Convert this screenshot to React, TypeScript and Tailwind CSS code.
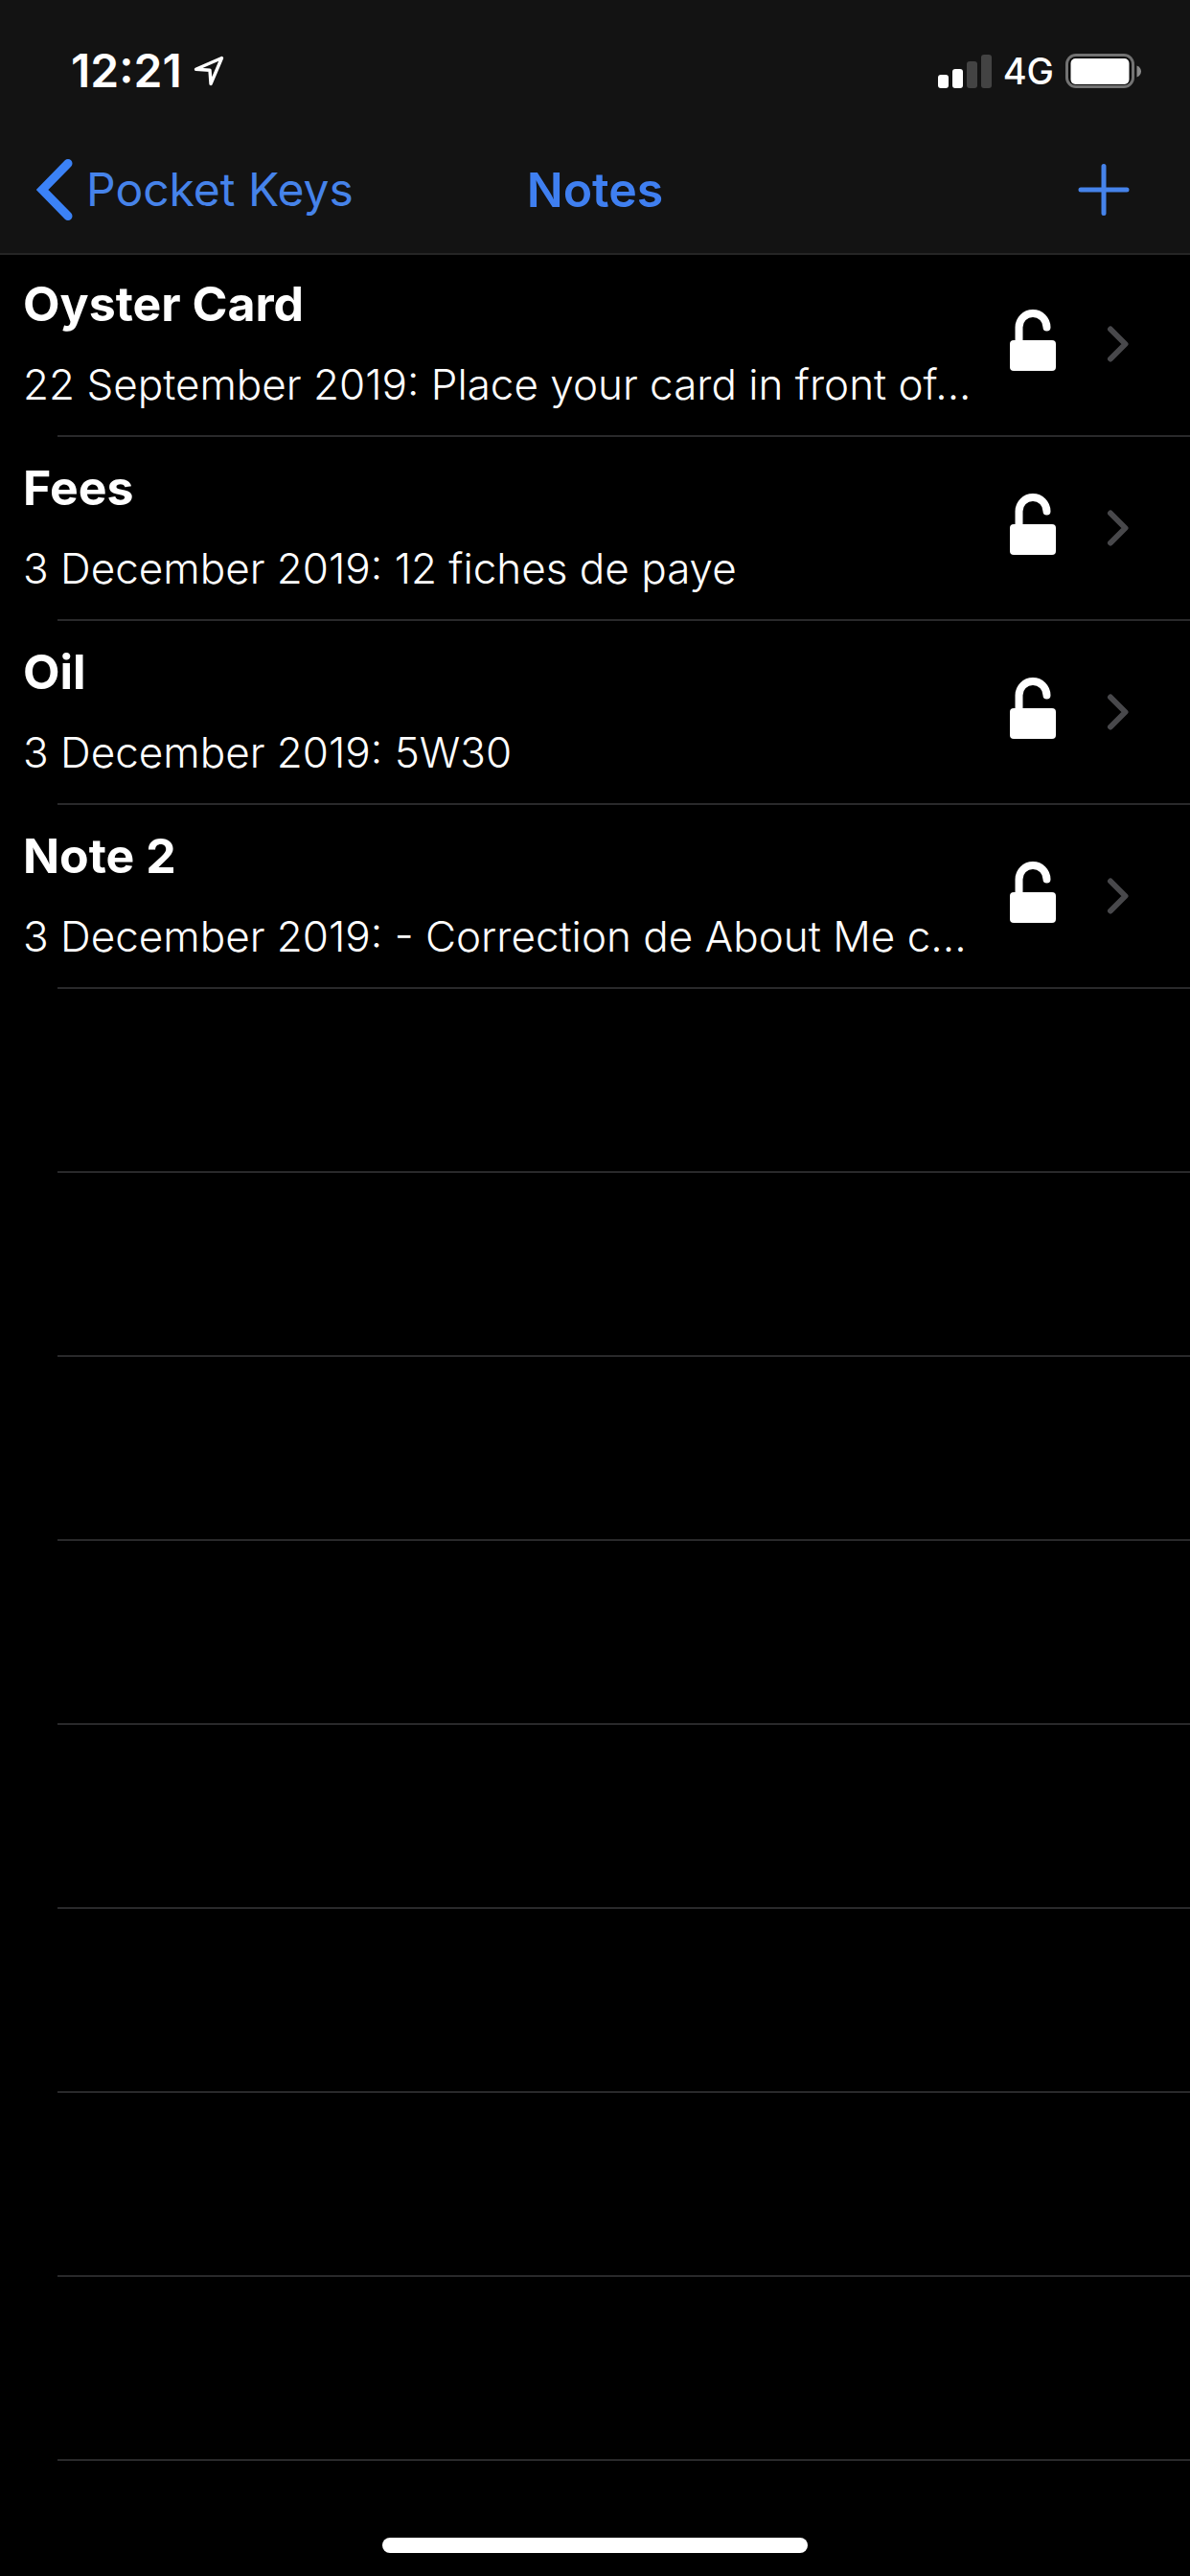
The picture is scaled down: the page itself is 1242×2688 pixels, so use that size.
type Note = {
  title: string;
  date: string;
  preview: string;
};

const NOTES: Note[] = [
  { title: "Oyster Card", date: "22 September 2019", preview: "Place your card in front of..." },
  { title: "Fees", date: "3 December 2019", preview: "12 fiches de paye" },
  { title: "Oil", date: "3 December 2019", preview: "5W30" },
  { title: "Note 2", date: "3 December 2019", preview: "- Correction de About Me c..." },
];

const EMPTY_ROWS = 8;

function LocationIcon() {
  return (
    <svg className="h-8 w-8" viewBox="0 0 32 32" fill="none" aria-hidden="true">
      <path
        d="M29.5 2.5 L2.5 14.2 L17 15.2 L18 29.5 Z"
        stroke="white"
        strokeWidth="3.4"
        strokeLinejoin="round"
      />
    </svg>
  );
}

function SignalIcon() {
  return (
    <svg className="h-9 w-14" viewBox="0 0 56 36" aria-hidden="true">
      <rect x="0" y="22" width="11" height="14" rx="3" fill="white" />
      <rect x="15" y="16" width="11" height="20" rx="3" fill="white" />
      <rect x="30" y="8" width="11" height="28" rx="3" fill="#434343" />
      <rect x="45" y="1" width="11" height="35" rx="3" fill="#434343" />
    </svg>
  );
}

function BatteryIcon() {
  return (
    <svg className="h-9 w-20" viewBox="0 0 80 36" aria-hidden="true">
      <rect x="0" y="0" width="72" height="36" rx="11" fill="#737373" />
      <rect x="3" y="3" width="66" height="30" rx="8" fill="#0b0b0b" />
      <rect x="5.5" y="5" width="61" height="27" rx="5" fill="white" />
      <path d="M74.5 12.5 C80.5 14.5 80.5 22.5 74.5 24.5 Z" fill="#8a8a8a" />
    </svg>
  );
}

function BackIcon() {
  return (
    <svg className="h-16 w-10" viewBox="0 0 40 64" fill="none" aria-hidden="true">
      <path d="M33 4.5 L6 32 L33 59.5" stroke="#3b82f7" strokeWidth="9" strokeLinecap="round" />
    </svg>
  );
}

function PlusIcon() {
  return (
    <svg className="h-14 w-14" viewBox="0 0 56 56" fill="none" aria-hidden="true">
      <path d="M28 3.5 V52.5 M4 28 H52" stroke="#4683ea" strokeWidth="5" strokeLinecap="round" />
    </svg>
  );
}

function UnlockIcon() {
  return (
    <svg className="h-18 w-12" viewBox="0 0 48 72" fill="none" aria-hidden="true">
      <rect x="0" y="32" width="48" height="32" rx="4" fill="white" />
      <path
        d="M9.5 34 V18.5 A14.5 14.5 0 0 1 38.5 18.5"
        stroke="white"
        strokeWidth="8"
        strokeLinecap="round"
      />
    </svg>
  );
}

function DisclosureIcon() {
  return (
    <svg className="h-10 w-6" viewBox="0 0 24 40" fill="none" aria-hidden="true">
      <path
        d="M5 4.5 L20.5 20 L5 35.5"
        stroke="#48484b"
        strokeWidth="6"
        strokeLinecap="round"
        strokeLinejoin="round"
      />
    </svg>
  );
}

function StatusBar() {
  return (
    <div className="flex h-[132px] items-center justify-between pl-[74px] pr-[50px] pt-4">
      <div className="flex items-center gap-3">
        <span className="text-[48px] leading-[60px] font-semibold">12:21</span>
        <LocationIcon />
      </div>
      <div className="flex items-center gap-3">
        <SignalIcon />
        <span className="text-[38px] leading-[48px] font-medium">4G</span>
        <BatteryIcon />
      </div>
    </div>
  );
}

function NavBar() {
  return (
    <nav className="grid h-[132px] grid-cols-[1fr_auto_1fr] items-center px-[38px] text-[#4683ea]">
      <a
        href="#pocket-keys"
        className="flex items-center gap-3 justify-self-start text-[48px] leading-[60px] font-normal"
      >
        <BackIcon />
        Pocket Keys
      </a>
      <h1 className="text-[50px] leading-[60px] font-semibold text-[#3f7ff0]">Notes</h1>
      <button type="button" aria-label="Add note" className="mr-6 cursor-pointer justify-self-end">
        <PlusIcon />
      </button>
    </nav>
  );
}

function NoteRow({ note }: { note: Note }) {
  return (
    <li className="h-48">
      <a href="#note" className="flex h-full flex-col">
        <div className="flex flex-1 items-center pl-6 pr-16">
          <div className="min-w-0 flex-1">
            <h2 className="text-[50px] leading-[56px] font-bold">{note.title}</h2>
            <p className="mt-7 text-[44px] leading-[56px] font-light whitespace-nowrap">
              {note.date}: {note.preview}
            </p>
          </div>
          <div className="flex shrink-0 items-center gap-13">
            <UnlockIcon />
            <DisclosureIcon />
          </div>
        </div>
        <div className="ml-[60px] h-0.5 bg-[#29292b]" />
      </a>
    </li>
  );
}

export default function App() {
  return (
    <div className="flex min-h-screen flex-col bg-black font-['Inter','Liberation_Sans',sans-serif] text-white">
      <header className="bg-[#131313] shadow-[0_2px_0_#252525]">
        <StatusBar />
        <NavBar />
      </header>

      <main className="flex-1">
        <ul>
          {NOTES.map((note) => (
            <NoteRow key={note.title} note={note} />
          ))}
          {Array.from({ length: EMPTY_ROWS }, (_, i) => (
            <li key={i} aria-hidden="true" className="flex h-48 flex-col justify-end">
              <div className="ml-[60px] h-0.5 bg-[#29292b]" />
            </li>
          ))}
        </ul>
      </main>

      {/* Home indicator */}
      <footer className="flex justify-center pb-6">
        <div className="h-4 w-[444px] rounded-full bg-white" />
      </footer>
    </div>
  );
}
